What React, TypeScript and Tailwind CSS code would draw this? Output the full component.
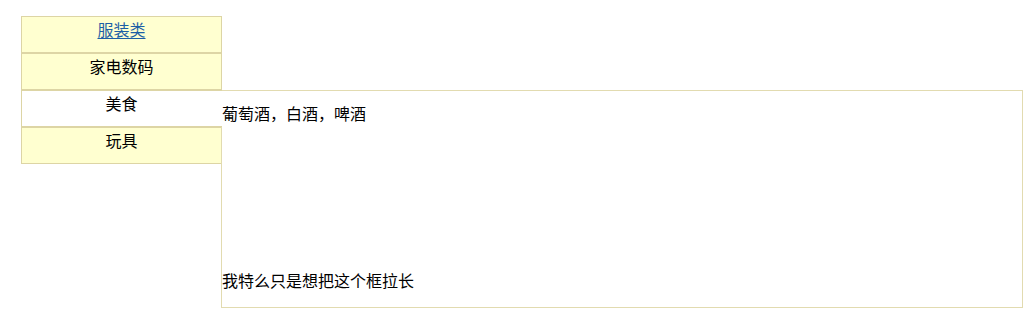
import React from "react";

const items = ["服装类", "家电数码", "美食", "玩具"];

export default function App() {
  return (
    <div
      className="min-h-[323px] w-[1033px] bg-white text-black"
      style={{ fontFamily: '"Noto Sans CJK SC", "Noto Sans", sans-serif' }}
    >
      <div className="flex items-start pt-[16px] pl-[21px]">
        <ul className="w-[201px] shrink-0">
          {items.map((t, i) => {
            const active = i === 2;
            return (
              <li
                key={t}
                className={
                  active
                    ? "relative z-10 h-[37px] border border-r-0 border-[#ddd5a5] bg-white pr-[1px] pt-[2px] text-center text-[16px] leading-[20px]"
                    : "h-[37px] border border-[#ddd5a5] bg-[#ffffd0] pt-[2px] text-center text-[16px] leading-[20px]"
                }
              >
                {i === 0 ? (
                  <a href="#" className="text-[#1d5fa6] underline underline-offset-2">
                    {t}
                  </a>
                ) : (
                  t
                )}
              </li>
            );
          })}
        </ul>
        <div className="ml-[-1px] mt-[74px] flex h-[218px] w-[802px] shrink-0 flex-col justify-between border border-[#e2dbb0] pt-[13px] pb-[18px] text-[16px] leading-[18px]">
          <p>葡萄酒，白酒，啤酒</p>
          <p>我特么只是想把这个框拉长</p>
        </div>
      </div>
    </div>
  );
}
